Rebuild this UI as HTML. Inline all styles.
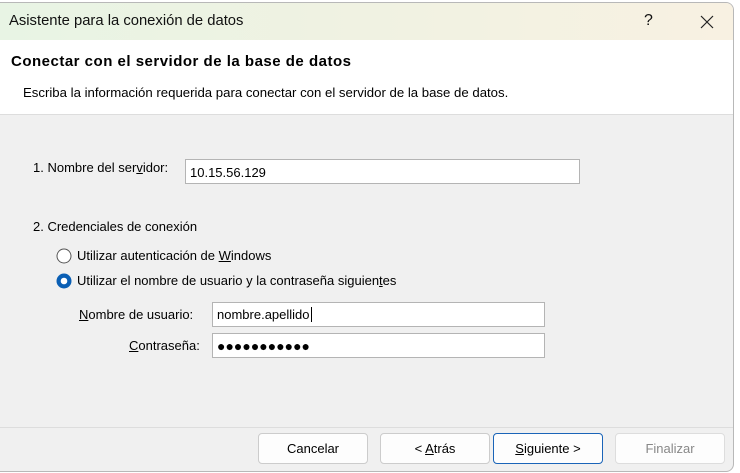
<!DOCTYPE html><html><head><style>
body{margin:0;width:740px;height:473px;background:#fff;position:relative;overflow:hidden;font-family:"Liberation Sans",sans-serif;font-size:13px;color:#000}
.win{position:absolute;left:0;top:2px;width:733px;height:468px;border:1px solid #b8b8b8;border-left:none;border-radius:0 8px 8px 0;background:#f0f0f0;overflow:hidden}
.title{height:37px;background:linear-gradient(90deg,#e8f4e4,#f0f2e2 50%,#f8f1e2);position:relative}
.title span{position:absolute;left:9px;top:10px;font-size:14.8px;color:#111}
.hdr{position:absolute;top:37px;left:0;right:0;height:74px;background:#fff;border-bottom:1px solid #ddd}
.a{position:absolute;white-space:nowrap}
.inp{position:absolute;background:#fff;border:1px solid #b4b4b4;height:22px;box-sizing:border-box;padding:4px 0 0 4px;font-size:13px}
.btn{position:absolute;top:430px;height:31px;width:110px;box-sizing:border-box;border:1px solid #ccc;border-radius:4px;background:#fdfdfd;text-align:center;line-height:29px;font-size:13px}
u{text-decoration:underline}
</style></head><body>
<div class="win">
<div class="title"><span>Asistente para la conexión de datos</span>
<span style="left:644px;top:9px;font-size:16px">?</span>
<svg style="position:absolute;left:700px;top:12px" width="14" height="14"><path d="M1 1L13 13M13 1L1 13" stroke="#222" stroke-width="1.2"/></svg></div>
<div class="hdr">
<div class="a" style="left:11px;top:13px;font-size:15px;font-weight:bold;letter-spacing:0.5px">Conectar con el servidor de la base de datos</div>
<div class="a" style="left:23px;top:45px;font-size:13.2px">Escriba la información requerida para conectar con el servidor de la base de datos.</div>
</div>
<div class="a" style="left:33px;top:157px">1. Nombre del ser<u>v</u>idor:</div>
<div class="inp" style="left:185px;top:156px;width:395px;height:25px;padding-top:5px">10.15.56.129</div>
<div class="a" style="left:33px;top:216px">2. Credenciales de conexión</div>
<svg class="a" style="left:56px;top:245px" width="16" height="16"><circle cx="8" cy="8" r="7" fill="#fff" stroke="#555"/></svg>
<div class="a" style="left:77px;top:245px">Utilizar autenticación de <u>W</u>indows</div>
<svg class="a" style="left:56px;top:270px" width="16" height="16"><circle cx="8" cy="8" r="7.5" fill="#0a5fb4"/><circle cx="8" cy="8" r="3.3" fill="#fff"/></svg>
<div class="a" style="left:77px;top:270px">Utilizar el nombre de usuario y la contraseña siguien<u>t</u>es</div>
<div class="a" style="left:79px;top:304px"><u>N</u>ombre de usuario:</div>
<div class="inp" style="left:212px;top:299px;width:333px;height:25px;padding-top:4px">nombre.apellido<span style="border-left:1px solid #000;margin-left:1px"></span></div>
<div class="a" style="left:129px;top:335px"><u>C</u>ontraseña:</div>
<div class="inp" style="left:212px;top:330px;width:333px;height:25px;padding-top:4px;font-size:14px">●●●●●●●●●●●</div>
<div class="a" style="left:0;right:0;top:424px;border-top:1px solid #ddd"></div>
<div class="btn" style="left:258px">Cancelar</div>
<div class="btn" style="left:380px">&lt; <u>A</u>trás</div>
<div class="btn" style="left:493px;border-color:#1a64b8"><u>S</u>iguiente &gt;</div>
<div class="btn" style="left:615px;color:#888;border-color:#ddd">Finalizar</div>
</div>
</body></html>
